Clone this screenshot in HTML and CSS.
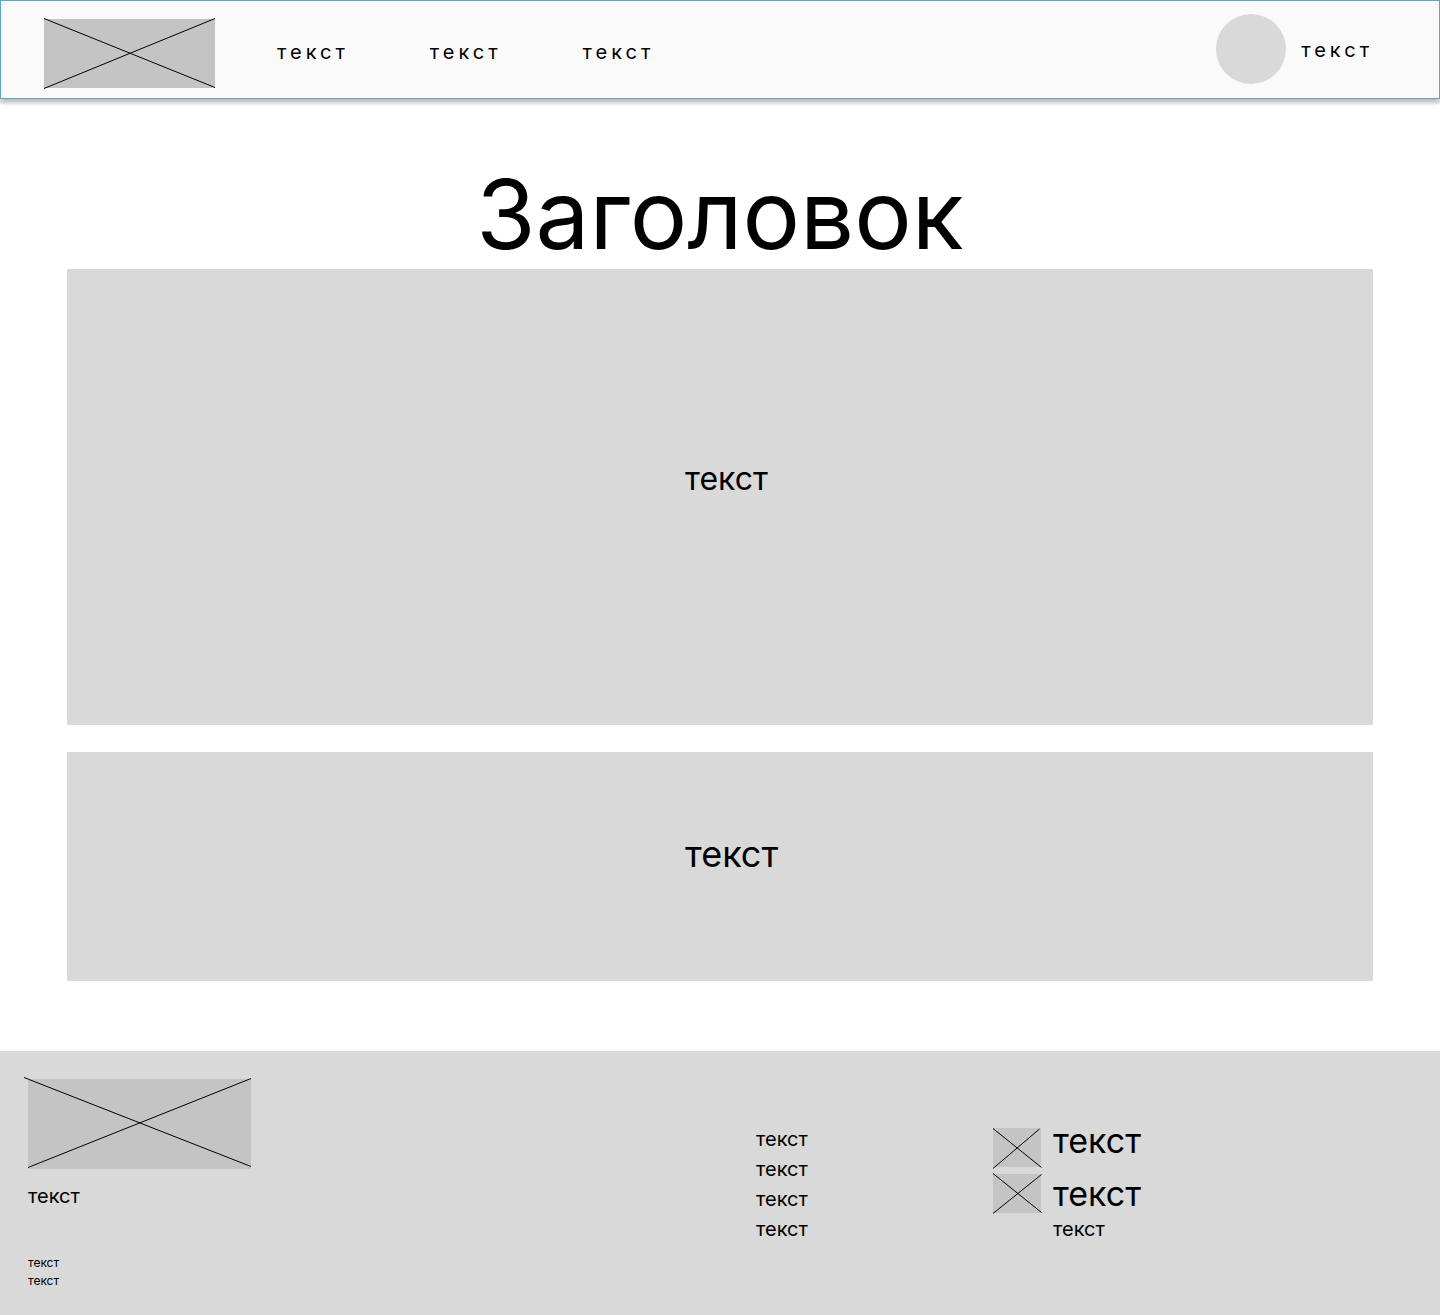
FILE: index.html
```html
<!DOCTYPE html>
<html lang="ru">
<head>
<meta charset="utf-8">
<meta name="viewport" content="width=device-width, initial-scale=1">
<title>Заголовок</title>
<link rel="stylesheet" href="styles.css">
</head>
<body>
<header class="header">
  <svg class="logo" viewBox="0 0 171 69" aria-hidden="true">
    <rect class="fill" width="171" height="69"/>
    <path class="cross" d="M0 -.5L171 68.500M0 69.500L171 -.5"/>
  </svg>
  <nav class="nav">
    <a href="#">текст</a>
    <a href="#">текст</a>
    <a href="#">текст</a>
  </nav>
  <a class="profile" href="#"><span class="avatar"></span><span class="name">текст</span></a>
</header>
<main class="main">
  <h1 class="title">Заголовок</h1>
  <section class="panel panel-large"><p>текст</p></section>
  <section class="panel panel-small"><p>текст</p></section>
</main>
<footer class="footer">
  <div class="about">
    <svg class="footer-logo" viewBox="0 0 223 90" aria-hidden="true">
      <rect class="fill" width="223" height="90"/>
      <path class="cross" d="M-4 -1.500L223 87.500M0 88.500L223 -.5"/>
    </svg>
    <p class="tagline">текст</p>
    <p class="legal">текст</p>
    <p class="legal">текст</p>
  </div>
  <nav class="links">
    <a href="#">текст</a>
    <a href="#">текст</a>
    <a href="#">текст</a>
    <a href="#">текст</a>
  </nav>
  <div class="contacts">
    <div class="icons">
      <svg class="icon" viewBox="0 0 48 39" aria-hidden="true">
        <rect class="fill" width="48" height="39"/>
        <path class="cross" d="M0 .5L48.500 39.500M0 40.500L46.500 1"/>
      </svg>
      <svg class="icon" viewBox="0 0 48 39" aria-hidden="true">
        <rect class="fill" width="48" height="39"/>
        <path class="cross" d="M0 -.5L48.500 38.500M0 39.500L48.500 .5"/>
      </svg>
    </div>
    <div class="details">
      <a class="contact" href="#">текст</a>
      <a class="contact" href="#">текст</a>
      <p class="note">текст</p>
    </div>
  </div>
</footer>
</body>
</html>
```
FILE: styles.css
```css
* {
  box-sizing: border-box;
}

body {
  margin: 0;
  background: #fff;
  color: #000;
  font-family: Inter, "Liberation Sans", sans-serif;
  font-size: 20px;
  line-height: 30px;
}

h1,
p {
  margin: 0;
  font-weight: 400;
}

a {
  color: inherit;
  text-decoration: none;
}

svg {
  display: block;
  flex: none;
  overflow: visible;
}

.fill {
  fill: #c4c4c4;
}

.cross {
  fill: none;
  stroke: #000;
  stroke-width: 1px;
}

/* Header */

.header {
  display: flex;
  align-items: flex-start;
  padding: 0 66px 18px 43px;
  min-height: 99px;
  border: 1px solid #5ba7c9;
  background: #fafafa;
  box-shadow: 0 4px 4px rgba(0, 0, 0, 0.25);
  letter-spacing: 4px;
}

.logo {
  width: 171px;
  height: 69px;
  margin: 18px 0 -8px;
}

.nav {
  display: flex;
  gap: 81px;
  margin: 36px 0 0 62px;
}

.profile {
  display: flex;
  gap: 15px;
  margin: 13px 0 -4px auto;
}

.avatar {
  width: 70px;
  height: 70px;
  border-radius: 50%;
  background: #d9d9d9;
}

.name {
  margin-top: 21px;
}

/* Main content */

.main {
  padding: 61px 67px 70px;
}

.title {
  margin-bottom: 1px;
  font-size: 96px;
  line-height: 108px;
  text-align: center;
}

.panel {
  display: flex;
  padding-left: calc(50% - 35px);
  background: #d9d9d9;
}

.panel-large {
  min-height: 456px;
  padding-top: 190px;
  font-size: 32px;
  line-height: 40px;
}

.panel-small {
  min-height: 229px;
  margin-top: 27px;
  padding-top: 82px;
  font-size: 36px;
  line-height: 40px;
}

/* Footer */

.footer {
  display: grid;
  grid-template-columns: 728fr 237fr 447fr;
  padding: 28px 0 25px 28px;
  background: #d9d9d9;
}

.footer-logo {
  width: 223px;
  height: 90px;
}

.tagline {
  margin: 12px 0 43px;
}

.legal {
  font-size: 12px;
  line-height: 18px;
}

.links {
  display: flex;
  flex-direction: column;
  align-items: flex-start;
  padding-top: 45px;
}

.contacts {
  display: flex;
  gap: 12px;
  padding-top: 42px;
}

.icons {
  display: flex;
  flex-direction: column;
  gap: 7px;
  padding-top: 7px;
}

.icon {
  width: 48px;
  height: 39px;
}

.details {
  display: flex;
  flex-direction: column;
  align-items: flex-start;
}

.contact {
  padding-bottom: 13px;
  font-size: 34px;
  line-height: 40px;
}

.contact + .contact {
  padding-bottom: 0;
}
```
